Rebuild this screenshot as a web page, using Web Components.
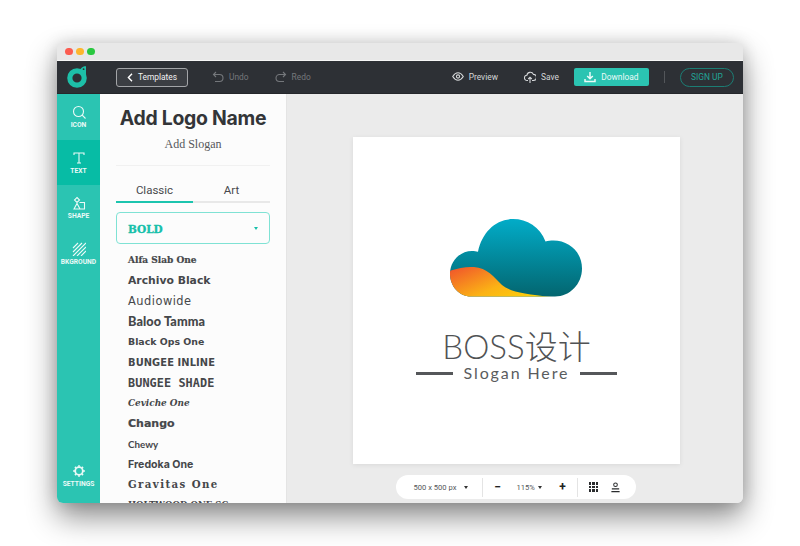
<!DOCTYPE html>
<html>
<head>
<meta charset="utf-8">
<style>
  html, body { margin: 0; height: 546px; overflow: hidden; background: #fff; }
  body { padding: 43px 57px 0; box-sizing: border-box; font-family: Roboto, "Liberation Sans", sans-serif; }
</style>
</head>
<body>
<app-window>
  <top-bar slot="top"></top-bar>
  <side-rail slot="rail"></side-rail>
  <font-panel slot="panel"></font-panel>
  <logo-stage slot="stage"></logo-stage>
</app-window>

<script>
const ICONS = {
  search: '<circle cx="6.500" cy="6.500" r="5"/><path d="M10.200 10.200 13.500 13.500"/>',
  text: '<path d="M2 4V2h10v2M7 2v10M5 12h4"/>',
  shape: '<path d="M5 1.500 7.500 4 5 6.500 2.500 4zM2 13 5 7.500 8 13zM7.500 6.500h5v6.500h-4"/>',
  stripes: '<path d="M1 6 6 1M1 10 10 1M1 14 14 1M5 14 14 5M9 14 14 9"/>',
  gear: '<circle cx="7" cy="7" r="3.800" stroke-width="1.800"/><path d="M7 1.300v1.500M7 11.200v1.500M1.300 7h1.500M11.200 7h1.500M3 3l1 1M10 10l1 1M3 11l1-1M10 4l1-1" stroke-width="1.800"/>',
  undo: '<path d="M1.500 3.500h6a3.500 3.500 0 0 1 0 7H3M4 1 1.500 3.500 4 6"/>',
  redo: '<path d="M10.500 3.500h-6a3.500 3.500 0 0 0 0 7H9M8 1l2.500 2.500L8 6"/>',
  eye: '<path d="M.7 5.500C2.300 3 4 1.800 6 1.800s3.700 1.200 5.300 3.700C9.700 8 8 9.200 6 9.200S2.300 8 .7 5.500z"/><circle cx="6" cy="5.500" r="1.600"/>',
  cloud: '<path d="M4 9.500H3.200a2.600 2.600 0 0 1-.3-5.200A3.400 3.400 0 0 1 9.400 3.400a3 3 0 0 1 0 6.100H8M6 12V6.500M4.200 8 6 6.200 7.800 8"/>',
  download: '<path d="M6 1v6.500M3.200 5 6 7.800 8.800 5M1 8v2.600h10V8" stroke-width="1.500"/>',
  stamp: '<circle cx="6" cy="3" r="2"/><path d="M2 7.500h8M1.500 10.500h9" stroke-width="1.300"/>'
};

class UiIcon extends HTMLElement {
  connectedCallback() {
    const name = this.getAttribute('name');
    const size = this.getAttribute('size') || 12;
    const box = this.getAttribute('box') || 12;
    this.attachShadow({ mode: 'open' });
    this.shadowRoot.innerHTML = `
      <style>
        :host { display: inline-flex; flex: none; line-height: 0; }
        svg { fill: none; stroke: currentColor; stroke-width: 1.1; }
      </style>
      <svg width="${size}" height="${size}" viewBox="0 0 ${box} ${box}">${ICONS[name]}</svg>`;
  }
}
customElements.define('ui-icon', UiIcon);

class AppWindow extends HTMLElement {
  connectedCallback() {
    this.attachShadow({ mode: 'open' });
    this.shadowRoot.innerHTML = `
      <style>
        :host {
          display: grid;
          width: 686px;
          height: 460px;
          grid-template-columns: 43px 187px 1fr;
          grid-template-rows: 18px 33px 1fr;
          border-radius: 6px;
          overflow: hidden;
          background: #ebebeb;
          box-shadow: 0 14px 30px rgba(0,0,0,.45), 0 0 16px rgba(0,0,0,.14);
        }
        .title {
          grid-column: 1 / -1;
          display: flex;
          align-items: center;
          gap: 3.500px;
          padding-left: 8px;
          background: #e8e8e8;
          border-bottom: 1px solid #f6f6f6;
          box-sizing: border-box;
        }
        .dot { width: 7.500px; height: 7.500px; border-radius: 50%; }
        ::slotted([slot=top]) { grid-column: 1 / -1; }
      </style>
      <div class="title">
        <span class="dot" style="background:#fc5c50"></span>
        <span class="dot" style="background:#fdb62d"></span>
        <span class="dot" style="background:#2ac840"></span>
      </div>
      <slot name="top"></slot>
      <slot name="rail"></slot>
      <slot name="panel"></slot>
      <slot name="stage"></slot>`;
  }
}
customElements.define('app-window', AppWindow);

class TopBar extends HTMLElement {
  connectedCallback() {
    this.attachShadow({ mode: 'open' });
    this.shadowRoot.innerHTML = `
      <style>
        :host {
          display: flex;
          align-items: center;
          background: #2d3035;
          border-bottom: 1px solid #25272b;
          box-sizing: border-box;
          font: 400 8.400px Roboto, sans-serif;
          color: #d4d6d8;
          padding-left: 10px;
        }
        .logo { flex: none; width: 21px; height: 22px; margin-right: 28px; }
        .back {
          flex: none; width: 72px; height: 19px; box-sizing: border-box;
          display: flex; align-items: center; justify-content: center; gap: 5px;
          border: 1px solid #a3a5a8; border-radius: 3px;
          background: #3b3e43; color: #f2f2f2; margin-right: 24px;
        }
        .tool { display: flex; align-items: center; gap: 5px; flex: none; }
        .off { color: #74777b; }
        .send { flex: none; width: 75px; height: 18px; margin-left: 15px; border-radius: 2px; background: #2bc4b2; color: #e9fbf8;
          display: flex; align-items: center; justify-content: center; gap: 5px; }
        .sep { flex: none; width: 1px; height: 12px; background: #53565a; margin: 0 15px; }
        .sign { flex: none; width: 54px; height: 19px; box-sizing: border-box; border: 1px solid #1c7d74; border-radius: 10px;
          color: #22a596; display: flex; align-items: center; justify-content: center; }
      </style>
      <svg class="logo" viewBox="0 0 21 22">
        <circle cx="10" cy="12" r="7.200" fill="none" stroke="#1dbfa8" stroke-width="5.200"/>
        <path d="M14 2.500c1-1.600 3-2.200 5-2.200V10h-5z" fill="#1dbfa8"/>
        <circle cx="16.600" cy="3.200" r=".9" fill="#2d3035"/>
      </svg>
      <div class="back">
        <svg width="6" height="9" viewBox="0 0 6 9"><path d="M5 .8 1.400 4.500 5 8.200" fill="none" stroke="#fff" stroke-width="1.400"/></svg>
        Templates
      </div>
      <div class="tool off" style="margin-right:26px"><ui-icon name="undo"></ui-icon>Undo</div>
      <div class="tool off" style="margin-right:141px"><ui-icon name="redo"></ui-icon>Redo</div>
      <div class="tool" style="margin-right:26px"><ui-icon name="eye"></ui-icon>Preview</div>
      <div class="tool"><ui-icon name="cloud"></ui-icon>Save</div>
      <div class="send"><ui-icon name="download"></ui-icon>Download</div>
      <div class="sep"></div>
      <div class="sign">SIGN UP</div>`;
  }
}
customElements.define('top-bar', TopBar);

class RailItem extends HTMLElement {
  connectedCallback() {
    this.attachShadow({ mode: 'open' });
    this.shadowRoot.innerHTML = `
      <style>
        :host {
          display: flex; flex-direction: column; align-items: center;
          height: 45.500px; box-sizing: border-box; padding-top: 11px; gap: 2px;
          color: #eafaf7; font: 700 6.700px Roboto, sans-serif;
        }
        :host([active]) { background: #07bca5; }
      </style>
      <slot></slot>`;
  }
}
customElements.define('rail-item', RailItem);

class SideRail extends HTMLElement {
  connectedCallback() {
    this.attachShadow({ mode: 'open' });
    this.shadowRoot.innerHTML = `
      <style>
        :host { display: flex; flex-direction: column; background: #2bc4b2; }
        .end { margin-top: auto; height: 50px; }
      </style>
      <rail-item><ui-icon name="search" size="14" box="14"></ui-icon>ICON</rail-item>
      <rail-item active><ui-icon name="text" size="14" box="14"></ui-icon>TEXT</rail-item>
      <rail-item><ui-icon name="shape" size="14" box="14"></ui-icon>SHAPE</rail-item>
      <rail-item><ui-icon name="stripes" size="14" box="14"></ui-icon>BKGROUND</rail-item>
      <rail-item class="end"><ui-icon name="gear" size="14" box="14"></ui-icon>SETTINGS</rail-item>`;
  }
}
customElements.define('side-rail', SideRail);

class FontRow extends HTMLElement {
  connectedCallback() {
    this.attachShadow({ mode: 'open' });
    this.shadowRoot.innerHTML = `
      <style>
        :host {
          display: flex; align-items: center; height: 20.400px; white-space: nowrap;
          color: #45474a; font-size: 11px; font-weight: 700;
        }
      </style>
      <slot></slot>`;
  }
}
customElements.define('font-row', FontRow);

class FontPanel extends HTMLElement {
  connectedCallback() {
    // text, family, weight, size, style, spacing, stroke
    const rows = [
      ['Alfa Slab One', '"DejaVu Serif"', 700, 9, 'normal', 0, .2],
      ['Archivo Black', '"DejaVu Sans"', 700, 10.800, 'normal', 0, 0],
      ['Audiowide', '"DejaVu Sans"', 400, 11.400, 'normal', .5, 0],
      ['Baloo Tamma', 'Lato', 900, 12.700, 'normal', .1, 0],
      ['Black Ops One', '"DejaVu Sans"', 700, 9.400, 'normal', 0, 0],
      ['BUNGEE INLINE', '"DejaVu Sans"', 700, 9.900, 'normal', .1, 0],
      ['BUNGEE SHADE', '"DejaVu Sans Mono"', 700, 11.800, 'normal', .1, 0],
      ['Ceviche One', '"DejaVu Serif"', 700, 8.900, 'italic', 0, 0],
      ['Chango', '"DejaVu Sans"', 700, 11, 'normal', 0, .2],
      ['Chewy', 'Lato', 700, 9.800, 'normal', 0, 0],
      ['Fredoka One', 'Inter', 700, 10.600, 'normal', 0, 0],
      ['Gravitas One', '"DejaVu Serif"', 700, 10.200, 'normal', 1.400, 0],
      ['HOLTWOOD ONE SC', '"DejaVu Serif"', 700, 8.600, 'normal', 0, 0]
    ];
    this.attachShadow({ mode: 'open' });
    this.shadowRoot.innerHTML = `
      <style>
        :host {
          display: block; background: #fcfcfc; overflow: hidden; box-sizing: border-box;
          padding: 0 16px; border-right: 1px solid #e4e4e4; height: 409px;
        }
        h1 { margin: 13px 0 0; text-align: center; font: 700 19.400px/22px Inter, "Liberation Sans", sans-serif; letter-spacing: -.25px; color: #333538; }
        .slogan { margin-top: 8px; text-align: center; font: 12px/14px "Liberation Serif", serif; color: #55575a; }
        hr { border: 0; border-top: 1px solid #f1f1f1; margin: 14px 0 0; }
        .tabs { display: grid; grid-template-columns: 1fr 1fr; margin-top: 15px; border-bottom: 2px solid #e8e8e8;
          font: 400 11.500px/15px Roboto, sans-serif; color: #48494c; text-align: center; }
        .tabs div { height: 18px; padding-top: 2px; margin-bottom: -2px; }
        .tabs .on { border-bottom: 2px solid #1cc4ae; }
        .select {
          margin-top: 9px; height: 32px; box-sizing: border-box; display: flex; align-items: center; justify-content: space-between;
          padding: 1px 11px 0; border: 1.500px solid #7fe2d4; border-radius: 4px;
          color: #17c0aa; font: 900 10.500px "DejaVu Serif", serif; -webkit-text-stroke: .3px #17c0aa;
        }
        .caret { width: 0; height: 0; border: 2.500px solid transparent; border-top: 3px solid #17c0aa; border-bottom: 0; }
        .list { margin-top: 6px; padding-left: 12px; }
      </style>
      <h1>Add Logo Name</h1>
      <div class="slogan">Add Slogan</div>
      <hr>
      <div class="tabs"><div class="on">Classic</div><div>Art</div></div>
      <div class="select">BOLD<span class="caret"></span></div>
      <div class="list">
        ${rows.map(r => `<font-row style='font-family:${r[1]},sans-serif;font-weight:${r[2]};font-size:${r[3]}px;font-style:${r[4]};letter-spacing:${r[5]}px;-webkit-text-stroke:${r[6]}px #45474a'>${r[0]}</font-row>`).join('')}
      </div>`;
  }
}
customElements.define('font-panel', FontPanel);

class LogoCard extends HTMLElement {
  connectedCallback() {
    this.attachShadow({ mode: 'open' });
    this.shadowRoot.innerHTML = `
      <style>
        :host {
          display: flex; flex-direction: column; align-items: center; flex: none;
          width: 327px; height: 327px; box-sizing: border-box; padding-top: 82px;
          background: #fff; box-shadow: 0 1px 5px rgba(0,0,0,.08);
        }
        svg { margin-right: 2px; }
        .name { margin-top: 31px; font: 300 33px/36px Lato, "Noto Sans CJK SC", sans-serif; color: #505254; white-space: nowrap; }
        .tag { display: flex; align-items: center; gap: 11px; font: 400 16px/18px Lato, sans-serif; letter-spacing: 1.900px; color: #5a5c5e; }
        .tag i { width: 37px; height: 3px; background: #55575a; }
      </style>
      <svg width="132" height="78" viewBox="0 0 132 78">
        <defs>
          <linearGradient id="sky" x1="0" y1="0" x2="0" y2="1">
            <stop offset="0" stop-color="#02acc8"/><stop offset="1" stop-color="#03656f"/>
          </linearGradient>
          <linearGradient id="sun" x1="0" y1="0" x2="1" y2=".7">
            <stop offset="0" stop-color="#f0502c"/><stop offset=".6" stop-color="#fbb215"/><stop offset="1" stop-color="#fdd108"/>
          </linearGradient>
          <clipPath id="puff"><path d="M21 77.500C9 77.500 0 67 0 55 0 42 10 32 22 32c2.500 0 4 .3 6 .8C32 13 46 0 63 0c14 0 27 8 32.500 22.500 2.500-.6 5-1 8-1C119 21.500 132 33 132 49.500 132 65 120 77.500 105 77.500z"/></clipPath>
        </defs>
        <g clip-path="url(#puff)">
          <rect width="132" height="78" fill="url(#sky)"/>
          <path d="M-1 52C8 49 16 47.500 24 48c13 .8 20 10 28 18 8 6.500 22 9 50 12v2H-1z" fill="url(#sun)"/>
        </g>
      </svg>
      <div class="name">BOSS设计</div>
      <div class="tag"><i></i>Slogan Here<i></i></div>`;
  }
}
customElements.define('logo-card', LogoCard);

class ZoomBar extends HTMLElement {
  connectedCallback() {
    this.attachShadow({ mode: 'open' });
    this.shadowRoot.innerHTML = `
      <style>
        :host {
          display: flex; align-items: center; flex: none; width: 240px; height: 24px; margin: 11px 2px 0 0;
          background: #fff; border-radius: 12px; box-sizing: border-box;
          font: 400 7.600px Roboto, sans-serif; color: #55575a; padding-left: 18px;
        }
        :host > * { flex: none; }
        .caret { width: 0; height: 0; border: 2.500px solid transparent; border-top: 3px solid #333; border-bottom: 0; }
        .sep { width: 1px; height: 19px; background: #e4e4e4; }
        .op { font: 700 12px/12px Roboto, sans-serif; color: #222; width: 8px; text-align: center; }
        .grid { display: grid; grid-template-columns: repeat(3, 2.800px); grid-auto-rows: 2.800px; gap: .8px; margin-left: 11px; }
        .grid b { background: #2a2c2e; }
        ui-icon { color: #2a2c2e; }
      </style>
      <span style="width:42px;white-space:nowrap">500 x 500 px</span>
      <span class="caret" style="margin-left:8.500px"></span>
      <span class="sep" style="margin-left:13.500px"></span>
      <span class="op" style="margin-left:11px">−</span>
      <span style="margin-left:15px;width:18px">115%</span>
      <span class="caret" style="margin-left:3.500px"></span>
      <span class="op" style="margin-left:16.500px">+</span>
      <span class="sep" style="margin-left:10px"></span>
      <span class="grid"><b></b><b></b><b></b><b></b><b></b><b></b><b></b><b></b><b></b></span>
      <ui-icon name="stamp" size="11" style="margin-left:12px"></ui-icon>`;
  }
}
customElements.define('zoom-bar', ZoomBar);

class LogoStage extends HTMLElement {
  connectedCallback() {
    this.attachShadow({ mode: 'open' });
    this.shadowRoot.innerHTML = `
      <style>
        :host { display: flex; flex-direction: column; align-items: center; padding: 43px 0 0 3px; background: #ebebeb; box-sizing: border-box; }
      </style>
      <logo-card></logo-card>
      <zoom-bar></zoom-bar>`;
  }
}
customElements.define('logo-stage', LogoStage);
</script>
</body>
</html>
